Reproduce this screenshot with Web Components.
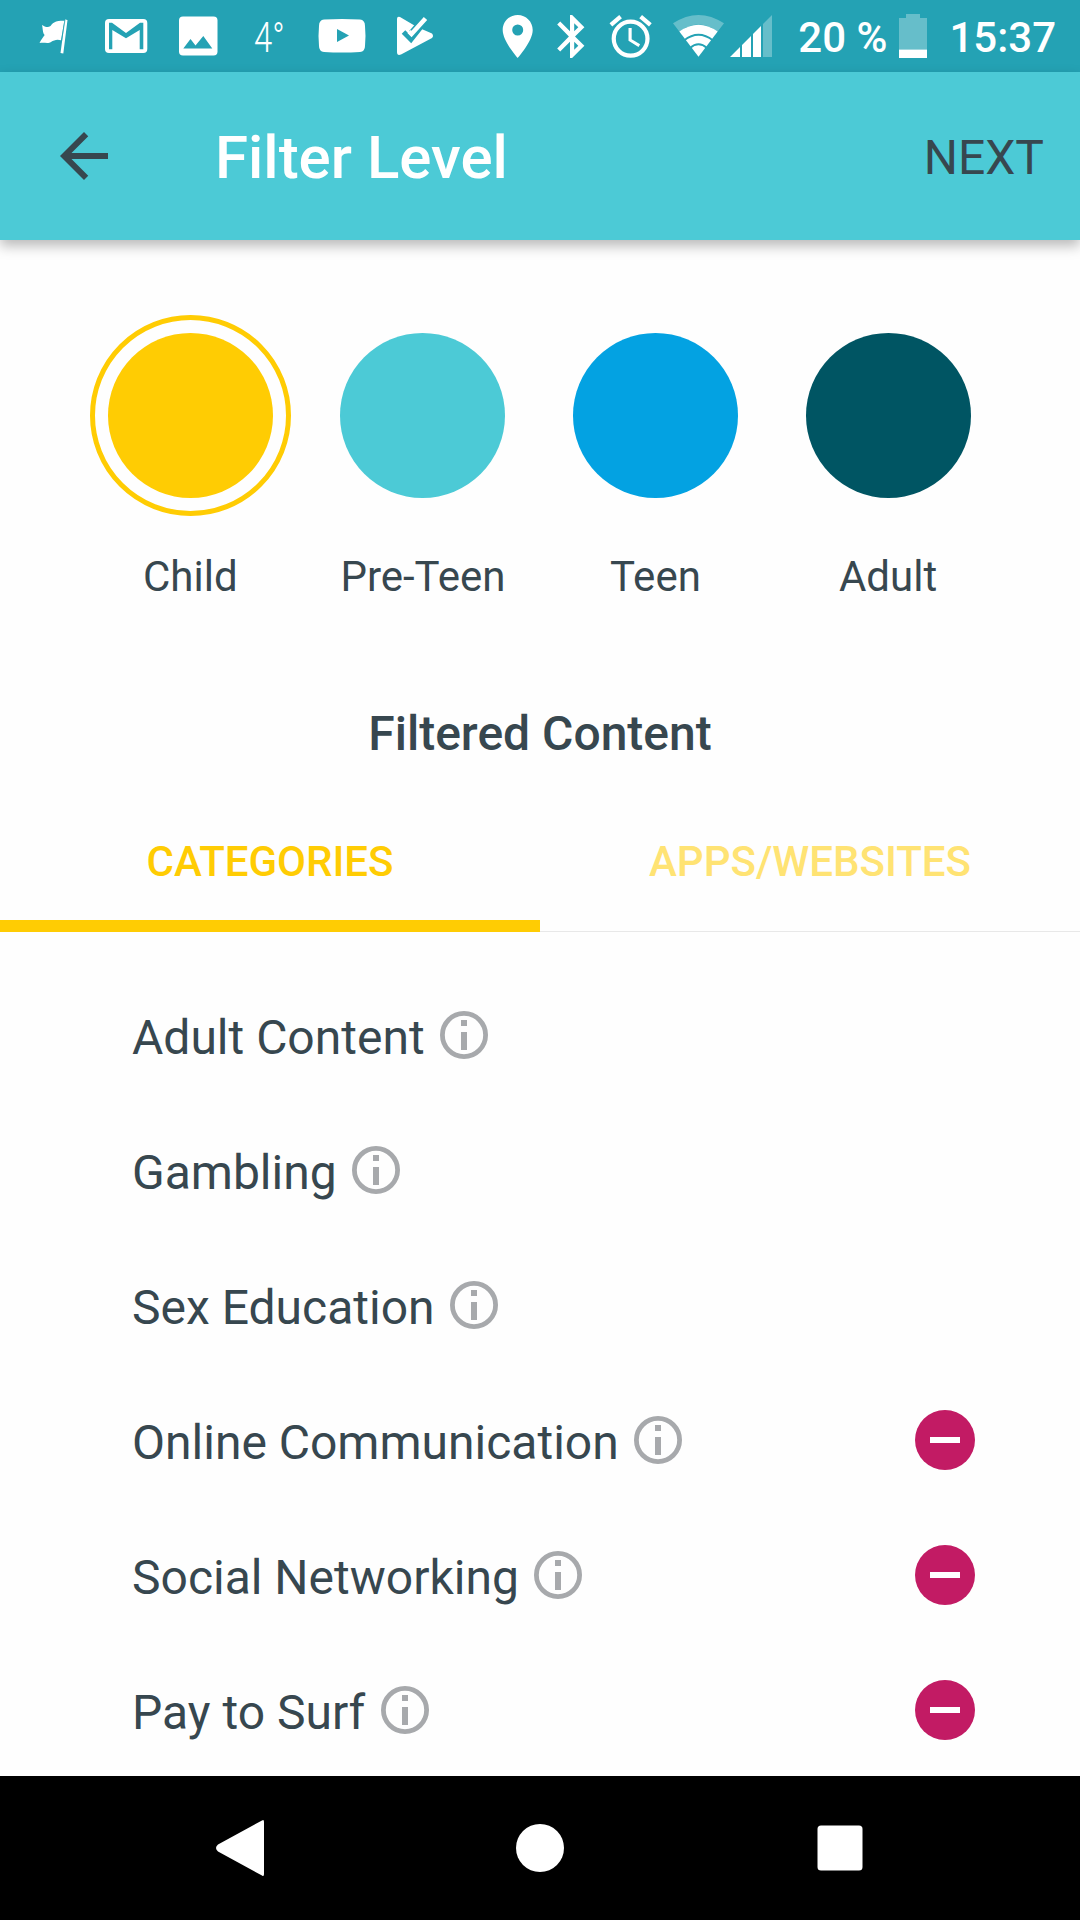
<!DOCTYPE html>
<html lang="en">
	<head>
		<meta charset="utf-8">
		<title>Filter Level</title>
		<style>
			body {
				background: #fefefe;
				color: #37474f;
				font-family: Roboto, "Liberation Sans", sans-serif;
				margin: 0;
			}
		</style>
	</head>
	<body>
		<app-screen>
			<status-bar slot="top" temperature="4°" battery="20 %" time="15:37"></status-bar>
			<app-header slot="top" action="NEXT">Filter Level</app-header>
			<level-picker>
				<level-option color="#ffcc03" selected>Child</level-option>
				<level-option color="#4ccad6">Pre-Teen</level-option>
				<level-option color="#03a2e2">Teen</level-option>
				<level-option color="#005563">Adult</level-option>
			</level-picker>
			<section-title>Filtered Content</section-title>
			<tab-bar>
				<tab-item active>CATEGORIES</tab-item>
				<tab-item>APPS/WEBSITES</tab-item>
			</tab-bar>
			<category-list>
				<category-item>Adult Content</category-item>
				<category-item>Gambling</category-item>
				<category-item>Sex Education</category-item>
				<category-item blocked>Online Communication</category-item>
				<category-item blocked>Social Networking</category-item>
				<category-item blocked>Pay to Surf</category-item>
			</category-list>
			<nav-bar slot="bottom"></nav-bar>
		</app-screen>
		<script>
			"use strict";
			(function() {
				function define(name, render) {
					window.customElements.define(name, class extends HTMLElement {
						constructor() {
							super();
							const template = document.createElement("template");
							template.innerHTML = render(this);
							this.attachShadow({ mode: "open" }).appendChild(template.content.cloneNode(true));
						}
					});
				}

				define("app-screen", () => `
					<style>
						:host {
							display: flex;
							flex-direction: column;
							height: 1920px;
							overflow: hidden;
							width: 1080px;
						}
						main {
							flex: 1;
							min-height: 0;
							overflow: hidden;
						}
						header { z-index: 1; }
					</style>
					<header><slot name="top"></slot></header>
					<main><slot></slot></main>
					<slot name="bottom"></slot>
				`);

				define("status-bar", el => `
					<style>
						:host {
							background: #24a2b4;
							color: #fff;
							display: flex;
							font-size: 42px;
							font-weight: 500;
							height: 72px;
							justify-content: space-between;
							line-height: 75px;
						}
						div { display: flex; }
						svg { display: block; fill: #fff; flex: none; height: 72px; }
						.temp { font-weight: 300; margin-left: 34px; transform: scaleX(.78); transform-origin: 0 0; width: 29px; }
						.level { margin-left: 23px; }
						.time { padding: 0 24px 0 8px; }
					</style>
					<div>
						<svg width="220" viewBox="0 0 220 72">
							<!-- flag -->
							<path d="M42 25C45 27 48 28 50.500 26C54 21 58 20.500 64.300 20.700L61 40.200C57 39 54 40 51 42C48 44 44 42 39.500 43C41 40 43 37 44.700 35C42.500 33 43 29 42 25ZM65 19.500L67.500 20L63.300 53.500L60.500 53Z"/>
							<path d="M65 20L61.500 41" stroke="#24a2b4" stroke-width=".6"/>
							<!-- mail -->
							<rect x="105" y="19" width="42.300" height="34" rx="4"/>
							<path d="M109 49.300V22.700H112L126 33L140 22.700H143.300V49.300H139.700V30L126 38.200L112.300 30V49.300Z" fill="#24a2b4"/>
							<!-- picture -->
							<rect x="179" y="16.500" width="38.500" height="39" rx="4"/>
							<path d="M183.300 48.500L190.500 39L195.500 45.500L203.300 36L212.300 48.500Z" fill="#24a2b4"/>
						</svg>
						<span class="temp">${el.getAttribute("temperature")}</span>
						<svg width="160" viewBox="283 0 160 72">
							<!-- video -->
							<path d="M324 19.500Q342 18.500 360 19.500Q365 20 365 26Q366 36 365 46Q365 51.500 360 52Q342 53 324 52Q319 51.500 319 46Q318 36 319 26Q319 20 324 19.500ZM337 29V42L349 35.500Z" fill-rule="evenodd"/>
							<!-- play with tick -->
							<path d="M397 19Q397 16 400 17L417 27L432 33.500Q434 36 432 38L401 54.500Q397 56 397 52Z"/>
							<path d="M403.500 32L411 39.500L428 18" fill="none" stroke="#24a2b4" stroke-width="5"/>
							<path d="M412 34L425.500 18.500" fill="none" stroke="#24a2b4" stroke-width="8"/>
							<path d="M409 31.500L411.500 34L425.500 18.500" fill="none" stroke="#fff" stroke-width="4.500"/>
						</svg>
					</div>
					<div>
						<svg width="280" viewBox="495 0 280 72">
							<!-- location -->
							<path d="M517.700 15C509.400 15 502.700 21.700 502.700 30C502.700 41.300 517.700 58 517.700 58S532.700 41.300 532.700 30C532.700 21.700 526 15 517.700 15ZM517.700 35.500A5.500 5.500 0 1 1 517.700 24.500A5.500 5.500 0 0 1 517.700 35.500Z"/>
							<!-- bluetooth -->
							<path d="M584.400 27.200L572.100 15H570V31.300L560.200 21.400L557.200 24.400L568.900 36.500L557.200 48.600L560.200 51.600L570 41.700V58H572.100L584.400 45.800L575 36.500ZM574.200 23.200L578.300 27.200L574.200 31.300ZM578.300 45.800L574.200 49.800V41.700Z"/>
							<!-- alarm -->
							<g transform="translate(605.300 11) scale(2.110 2.130)">
								<path d="M22 5.720L17.400 1.860L16.110 3.390L20.710 7.250ZM7.880 3.390L6.600 1.860L2 5.710L3.290 7.240ZM12.500 8H11V14L15.750 16.850L16.500 15.620L12.500 13.250ZM12 4A9 9 0 1 0 12 22A9 9 0 0 0 12 4ZM12 20A7 7 0 1 1 12 6A7 7 0 0 1 12 20Z"/>
							</g>
							<!-- wifi -->
							<path d="M673 23.300Q698.500 6.500 724 23.300L717.700 31.500Q698.500 17.500 679.300 31.500Z" fill-opacity=".3"/>
							<path d="M679.300 31.500Q698.500 18 717.700 31.500L698.500 56.700Z"/>
							<path d="M684 40.500Q698.500 29 713 40.500M690 48Q698.500 40.500 707 48" fill="none" stroke="#24a2b4" stroke-width="1.800"/>
							<!-- signal -->
							<path d="M763 57V24L772 15V57Z" fill-opacity=".3"/>
							<path d="M730 57L740 47V57ZM742 57V45L751 36V57ZM753 57V34L761 26V57Z"/>
						</svg>
						<span class="level">${el.getAttribute("battery")}</span>
						<svg width="54" viewBox="887 0 54 72">
							<path d="M899 18H906V14H920V18H927V49.500H899Z" fill-opacity=".3"/>
							<path d="M899 49.500H927V58H899Z"/>
						</svg>
						<span class="time">${el.getAttribute("time")}</span>
					</div>
				`);

				define("app-header", el => `
					<style>
						:host {
							align-items: center;
							background: #4ccad6;
							box-shadow: 0 6px 12px rgba(0, 0, 0, .27);
							box-sizing: border-box;
							display: flex;
							height: 168px;
							padding: 0 36px 0 48px;
							position: relative;
						}
						svg { fill: #37474f; }
						h1 {
							color: #fff;
							flex: 1;
							font-size: 60px;
							font-weight: 500;
							line-height: 70px;
							margin: 4px 0 0 95px;
						}
						span { font-size: 48px; margin-top: 3px; }
					</style>
					<svg width="72" height="72" viewBox="0 0 24 24"><path d="M20 11H7.830L13.420 5.410L12 4L4 12L12 20L13.410 18.590L7.830 13H20Z"/></svg>
					<h1><slot></slot></h1>
					<span>${el.getAttribute("action")}</span>
				`);

				define("level-picker", () => `
					<style>
						:host {
							box-sizing: border-box;
							display: flex;
							height: 449px;
							padding: 75px 0 0 74px;
						}
					</style>
					<slot></slot>
				`);

				define("level-option", el => `
					<style>
						:host {
							align-items: center;
							display: flex;
							flex-direction: column;
							font-size: 42px;
							gap: 36px;
							line-height: 50px;
							width: 232.6px;
						}
						.ring {
							border: 5px solid transparent;
							border-radius: 50%;
							padding: 13px;
						}
						:host([selected]) .ring { border-color: ${el.getAttribute("color")}; }
						.dot {
							background: ${el.getAttribute("color")};
							border-radius: 50%;
							height: 165px;
							width: 165px;
						}
					</style>
					<div class="ring"><div class="dot"></div></div>
					<slot></slot>
				`);

				define("section-title", () => `
					<style>
						:host {
							display: block;
							font-size: 48px;
							font-weight: 500;
							height: 97px;
							line-height: 90px;
							text-align: center;
						}
					</style>
					<slot></slot>
				`);

				define("tab-bar", () => `
					<style>
						:host {
							box-shadow: inset 0 -1px #e8e8e8;
							display: flex;
							height: 146px;
						}
					</style>
					<slot></slot>
				`);

				define("tab-item", () => `
					<style>
						:host {
							border-bottom: 12px solid transparent;
							box-sizing: border-box;
							color: #ffe373;
							flex: 1;
							font-size: 42px;
							font-weight: 500;
							line-height: 152px;
							text-align: center;
						}
						:host([active]) {
							border-color: #ffcc03;
							color: #ffcc03;
						}
					</style>
					<slot></slot>
				`);

				define("category-list", () => `
					<style>
						:host {
							display: flex;
							flex-direction: column;
							padding: 35px 105px 0 132px;
						}
					</style>
					<slot></slot>
				`);

				define("category-item", el => `
					<style>
						:host {
							align-items: center;
							display: flex;
							flex: none;
							font-size: 48px;
							height: 135px;
						}
						span { line-height: 56px; padding-top: 6px; }
						.info { margin-left: 15.4px; }
						.blocked { margin-left: auto; }
					</style>
					<span><slot></slot></span>
					<svg class="info" width="48" height="48" viewBox="0 0 48 48" fill="#a7a9ac">
						<circle cx="24" cy="24" r="21.600" fill="none" stroke="#a7a9ac" stroke-width="4.800"/>
						<path d="M21 9H27V15H21ZM21 21H27V39H21Z"/>
					</svg>
					${el.hasAttribute("blocked") ? `
						<svg class="blocked" width="60" height="60" viewBox="0 0 60 60">
							<circle cx="30" cy="30" r="30" fill="#c21b64"/>
							<path d="M15 27H45V33H15Z" fill="#fff"/>
						</svg>` : ""}
				`);

				define("nav-bar", () => `
					<style>
						:host {
							align-items: center;
							background: #000;
							display: flex;
							gap: 240px;
							height: 144px;
							justify-content: center;
						}
						svg { fill: #fff; }
					</style>
					<svg width="60" height="60" viewBox="0 0 60 60"><path d="M52 2.500Q54 1 54 4V56Q54 59 52 57.500L8 33.500Q4 30 8 26.500Z"/></svg>
					<svg width="60" height="60" viewBox="0 0 60 60"><circle cx="30" cy="30" r="24"/></svg>
					<svg width="60" height="60" viewBox="0 0 60 60"><rect x="7.500" y="7.500" width="45" height="45" rx="3.500"/></svg>
				`);
			})();
		</script>
	</body>
</html>
